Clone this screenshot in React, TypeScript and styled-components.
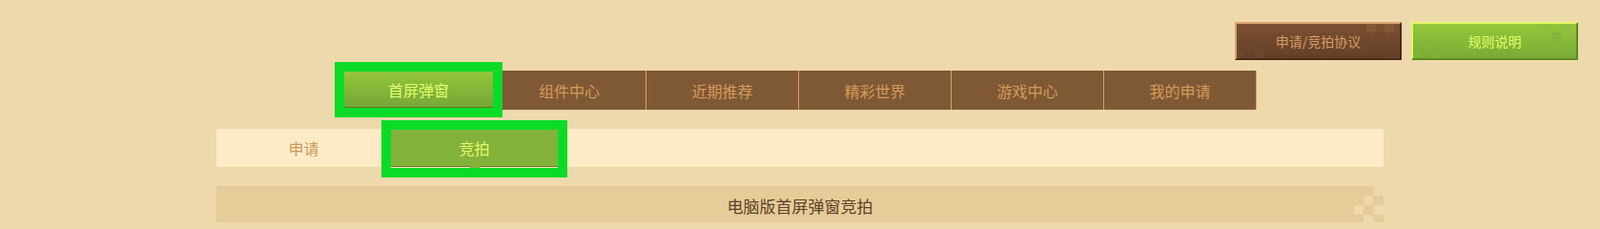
import React from "react";
import styled, { createGlobalStyle, css } from "styled-components";

const GlobalStyle = createGlobalStyle`
  html, body {
    margin: 0;
    padding: 0;
    background: #eed9ac;
    font-family: "Noto Sans CJK SC", "Microsoft YaHei", sans-serif;
    overflow: hidden;
  }
  * { box-sizing: border-box; }
`;

const Page = styled.div`
  width: 1678px;
  height: 233px;
  overflow: hidden;
  display: flex;
  flex-direction: column;
  padding-top: 23px;
  background: #eed9ac;
`;

const TopBar = styled.div`
  display: flex;
  justify-content: flex-end;
  gap: 10px;
  padding-right: 23px;
`;

type Variant = "brown" | "green";

const palette = {
  brown: {
    text: "#d39d64",
    bg: "linear-gradient(#7b5031, #643f29)",
    border: "#dba66e #4a2a17 #4a2a17 #d8a26b",
    px1: "#6f472b",
    px2: "#84593a",
  },
  green: {
    text: "#e4fb6c",
    bg: "linear-gradient(#95c83b, #79aa37)",
    border: "#e6f86a #5c8b22 #5c8b22 #e3f566",
    px1: "#82b43a",
    px2: "#8ec03b",
  },
};

const PixelButton = styled.button<{ $variant: Variant }>`
  position: relative;
  width: 175px;
  height: 40px;
  display: flex;
  align-items: center;
  justify-content: center;
  padding: 0;
  font-family: inherit;
  font-size: 14px;
  border-style: solid;
  border-width: 2px;
  cursor: pointer;
  overflow: hidden;
  color: ${({ $variant }) => palette[$variant].text};
  background: ${({ $variant }) => palette[$variant].bg};
  border-color: ${({ $variant }) => palette[$variant].border};

  /* pixel decoration, bottom-left cluster */
  &::before {
    content: "";
    position: absolute;
    left: 9px;
    top: 18px;
    width: 10px;
    height: 10px;
    background: ${({ $variant }) => palette[$variant].px1};
    box-shadow: -11px 10px 0 ${({ $variant }) => palette[$variant].px1},
      9px 10px 0 ${({ $variant }) => palette[$variant].px1};
    opacity: 0.8;
  }
  /* pixel decoration, top-right cluster */
  &::after {
    content: "";
    position: absolute;
    right: 25px;
    top: 0;
    width: 10px;
    height: 9px;
    background: ${({ $variant }) => palette[$variant].px2};
    box-shadow: 9px 9px 0 ${({ $variant }) => palette[$variant].px1},
      19px 0 0 ${({ $variant }) => palette[$variant].px2};
  }
`;

const Label = styled.span`
  position: relative;
  z-index: 1;
`;

const Main = styled.div`
  display: flex;
  flex-direction: column;
  gap: 20px;
  padding: 11px 227px 0;
`;

const NavRow = styled.div`
  display: flex;
  padding-left: 134px;
`;

const Nav = styled.nav`
  display: flex;
  align-items: flex-start;
  height: 41px;
  background: #7f5935;
`;

const NavItem = styled.div<{ $active?: boolean }>`
  flex: none;
  display: flex;
  align-items: center;
  justify-content: center;
  font-size: 16px;
  ${({ $active }) =>
    $active
      ? css`
          position: relative;
          z-index: 2;
          width: 156px;
          height: 38px;
          margin-top: 1px;
          color: #e2fd70;
          background: linear-gradient(#93c63a, #76a738);
          border-bottom: 1px solid #587a1f;
          outline: 10px solid #0bdb27;
        `
      : css`
          width: 160px;
          height: 41px;
          color: #d69a5b;
          border-right: 1px solid #d6a468;
          &:nth-child(2) {
            width: 161px;
          }
        `}
`;

const SubStrip = styled.div`
  display: flex;
  align-items: flex-start;
  height: 40px;
  background: #fdebc5;
`;

const SubTab = styled.div<{ $active?: boolean; $w: number }>`
  position: relative;
  flex: none;
  width: ${({ $w }) => $w}px;
  height: 40px;
  display: flex;
  align-items: center;
  justify-content: center;
  font-size: 16px;
  ${({ $active }) =>
    $active
      ? css`
          z-index: 2;
          margin-top: 1px;
          padding-bottom: 2px;
          color: #e4f86a;
          background: linear-gradient(
            to bottom,
            #83b23b 0 38px,
            #5f7f22 38px 39px,
            #f4e6bd 39px 40px
          );
          outline: 10px solid #0bdb27;
          &::after {
            content: "";
            position: absolute;
            left: 50%;
            bottom: 0;
            width: 10px;
            height: 2px;
            margin-left: -5px;
            background: #83b23b;
          }
        `
      : css`
          color: #c99a5e;
        `}
`;

const Section = styled.section`
  position: relative;
  height: 60px;
  background: #e5cc98;

  /* stepped pixel corner at the top right */
  &::after {
    content: "";
    position: absolute;
    right: 0;
    top: 0;
    width: 10px;
    height: 10px;
    background: #eed9ac;
    box-shadow: -11px 10px 0 #eed9ac, 0 20px 0 #eed9ac, -21px 20px 0 #eed9ac,
      -11px 30px 0 #eed9ac;
  }
`;

const SectionTitle = styled.h2`
  margin: 0;
  height: 40px;
  display: flex;
  align-items: center;
  justify-content: center;
  font-size: 17px;
  font-weight: normal;
  color: #5b4128;
`;

const navItems = ["首屏弹窗", "组件中心", "近期推荐", "精彩世界", "游戏中心", "我的申请"];

const subTabs = [
  { label: "申请", width: 183 },
  { label: "竞拍", width: 175, active: true },
];

export default function App() {
  return (
    <Page>
      <GlobalStyle />
      <TopBar>
        <PixelButton $variant="brown">
          <Label>申请/竞拍协议</Label>
        </PixelButton>
        <PixelButton $variant="green">
          <Label>规则说明</Label>
        </PixelButton>
      </TopBar>

      <Main>
        <NavRow>
          <Nav>
            {navItems.map((label, i) => (
              <NavItem key={label} $active={i === 0}>
                {label}
              </NavItem>
            ))}
          </Nav>
        </NavRow>

        <SubStrip>
          {subTabs.map((tab) => (
            <SubTab key={tab.label} $active={tab.active} $w={tab.width}>
              {tab.label}
            </SubTab>
          ))}
        </SubStrip>

        <Section>
          <SectionTitle>电脑版首屏弹窗竞拍</SectionTitle>
        </Section>
      </Main>
    </Page>
  );
}
